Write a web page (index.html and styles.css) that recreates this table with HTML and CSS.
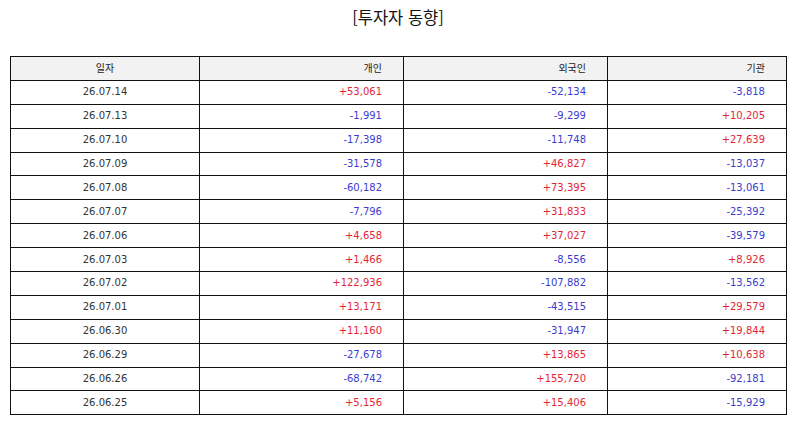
FILE: index.html
```html
<!DOCTYPE html>
<html lang="ko">
<head>
<meta charset="utf-8">
<link rel="stylesheet" href="styles.css">
</head>
<body>
<h1 class="title">[투자자 동향]</h1>
<table class="flow">
<colgroup>
<col class="c-date"><col class="c-num"><col class="c-num"><col class="c-last">
</colgroup>
<thead>
<tr><th class="date">일자</th><th>개인</th><th>외국인</th><th>기관</th></tr>
</thead>
<tbody>
<tr><td class="date">26.07.14</td><td class="up">+53,061</td><td class="down">-52,134</td><td class="down">-3,818</td></tr>
<tr><td class="date">26.07.13</td><td class="down">-1,991</td><td class="down">-9,299</td><td class="up">+10,205</td></tr>
<tr><td class="date">26.07.10</td><td class="down">-17,398</td><td class="down">-11,748</td><td class="up">+27,639</td></tr>
<tr><td class="date">26.07.09</td><td class="down">-31,578</td><td class="up">+46,827</td><td class="down">-13,037</td></tr>
<tr><td class="date">26.07.08</td><td class="down">-60,182</td><td class="up">+73,395</td><td class="down">-13,061</td></tr>
<tr><td class="date">26.07.07</td><td class="down">-7,796</td><td class="up">+31,833</td><td class="down">-25,392</td></tr>
<tr><td class="date">26.07.06</td><td class="up">+4,658</td><td class="up">+37,027</td><td class="down">-39,579</td></tr>
<tr><td class="date">26.07.03</td><td class="up">+1,466</td><td class="down">-8,556</td><td class="up">+8,926</td></tr>
<tr><td class="date">26.07.02</td><td class="up">+122,936</td><td class="down">-107,882</td><td class="down">-13,562</td></tr>
<tr><td class="date">26.07.01</td><td class="up">+13,171</td><td class="down">-43,515</td><td class="up">+29,579</td></tr>
<tr><td class="date">26.06.30</td><td class="up">+11,160</td><td class="down">-31,947</td><td class="up">+19,844</td></tr>
<tr><td class="date">26.06.29</td><td class="down">-27,678</td><td class="up">+13,865</td><td class="up">+10,638</td></tr>
<tr><td class="date">26.06.26</td><td class="down">-68,742</td><td class="up">+155,720</td><td class="down">-92,181</td></tr>
<tr><td class="date">26.06.25</td><td class="up">+5,156</td><td class="up">+15,406</td><td class="down">-15,929</td></tr>
</tbody>
</table>
</body>
</html>
```
FILE: styles.css
```css
html, body {
  margin: 0;
  padding: 0;
  background: #fff;
}
body {
  font-family: "Noto Sans CJK KR", "Noto Sans", sans-serif;
  color: #222;
  padding: 0 8px 0 10px;
}
.title {
  margin: 0;
  padding-top: 6px;
  height: 56px;
  box-sizing: border-box;
  text-align: center;
  font-size: 16.5px;
  font-weight: 400;
  color: #111;
  line-height: 22px;
}
.flow {
  border-collapse: collapse;
  width: 776px;
  table-layout: fixed;
  font-family: "DejaVu Sans", "Noto Sans CJK KR", sans-serif;
  font-size: 10px;
}
.c-date { width: 189px; }
.c-num { width: 204px; }
.c-last { width: 179px; }
.flow tr {
  height: 23.9px;
}
.flow th, .flow td {
  border: 1px solid #111;
  padding: 0 21px 0 0;
  text-align: right;
  font-weight: 400;
  line-height: 12px;
  color: #333;
}
.flow th {
  background: #f2f2f2;
  font-family: "Noto Sans CJK KR", sans-serif;
  color: #222;
}
.flow .date {
  text-align: center;
  padding: 0;
}
.flow .up { color: #e32636; }
.flow .down { color: #3b3bd0; }
```
